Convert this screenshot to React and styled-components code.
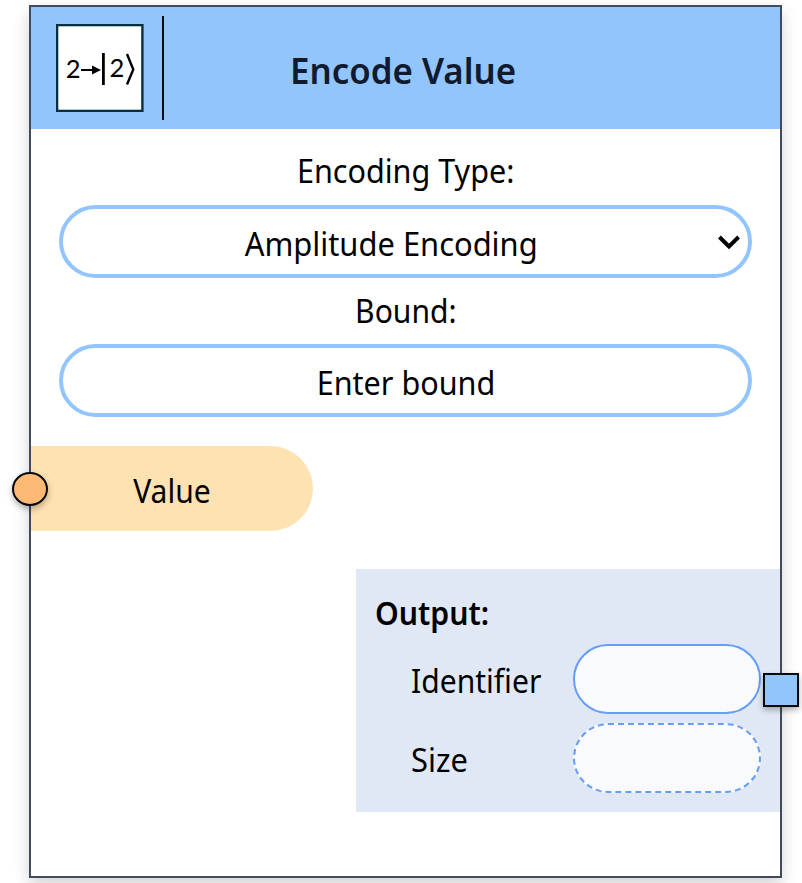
import React from 'react';
import styled, { createGlobalStyle } from 'styled-components';

const GlobalStyle = createGlobalStyle`
  *, *::before, *::after { box-sizing: border-box; }
  body {
    margin: 0;
    background: #fff;
    overflow: hidden;
    font-family: "Noto Sans", "Open Sans", sans-serif;
    color: #000;
  }
`;

const Canvas = styled.main`
  height: 883px;
  padding: 5px 20px 5px 29px;
  overflow: hidden;
`;

const Card = styled.article`
  position: relative;
  display: flex;
  flex-direction: column;
  width: 753px;
  height: 873px;
  border: 2px solid #414b5c;
  background: #fff;
  box-shadow: 0 8px 14px rgba(0, 0, 0, 0.13), 0 3px 20px rgba(0, 0, 0, 0.05);
`;

const Header = styled.header`
  display: grid;
  grid-template-columns: 132px 1fr 132px;
  align-items: center;
  height: 122px;
  flex: none;
  background: #93c5fd;
`;

const IconCell = styled.div`
  display: flex;
  align-items: center;
  justify-content: space-between;
  height: 104px;
  padding-left: 25px;
  width: 133px;
  border-right: 2px solid #05080d;
`;

const Text = styled.span`
  display: block;
  white-space: nowrap;
  font-size: ${(p) => p.$size || 32.5}px;
  font-weight: ${(p) => p.$weight || 400};
  line-height: 44px;
  color: ${(p) => p.$color || '#000'};
  transform: scaleX(${(p) => p.$condense || 1});
  transform-origin: ${(p) => p.$origin || 'center'};
`;

const Title = styled.h1`
  margin: 0;
  display: flex;
  justify-content: center;
  padding: 3px 4px 0 0;
`;

const Fields = styled.section`
  display: flex;
  flex-direction: column;
  align-items: center;
  padding: 20px 27px 0 27px;
`;

const Pill = styled.div`
  position: relative;
  display: flex;
  align-items: center;
  justify-content: center;
  width: 693px;
  height: 73px;
  padding: 5px ${(p) => p.$right || 0}px 0 0;
  margin: ${(p) => p.$margin};
  border: 4px solid #93c5fd;
  border-radius: 37px;
`;

const Chevron = styled.svg`
  position: absolute;
  right: 7px;
  top: 25px;
`;

const InputPort = styled.section`
  position: relative;
  display: flex;
  align-items: center;
  justify-content: center;
  width: 282px;
  height: 85px;
  margin-top: 29px;
  padding-top: 4px;
  border-radius: 0 43px 43px 0;
  background: #ffe2b1;
`;

const Handle = styled.i`
  position: absolute;
  width: 36px;
  height: 34px;
  border: 2px solid #05080d;
  box-shadow: 0 3px 6px rgba(0, 0, 0, 0.3);
`;

const RoundHandle = styled(Handle)`
  left: -19.5px;
  top: 26px;
  border-radius: 50%;
  background: #fdba74;
`;

const SquareHandle = styled(Handle)`
  right: -19px;
  top: 104px;
  background: #93c5fd;
`;

const Output = styled.section`
  position: relative;
  align-self: flex-end;
  width: 424px;
  height: 243px;
  margin-top: 38px;
  padding: 22px 19px 0 19px;
  background: #e1e8f5;
`;

const OutputRow = styled.div`
  display: flex;
  align-items: center;
  justify-content: space-between;
  height: 70px;
  padding-left: 36px;
  margin-top: 9px;

  > span { margin-top: 4px; }
`;

const OutputField = styled.div`
  width: 188px;
  height: 70px;
  border: 2px ${(p) => p.$line || 'solid'} #669df6;
  border-radius: 36px;
  background: #f8fafe;
`;

function EncodeIcon() {
  return (
    <svg width="88" height="88" viewBox="0 0 88 88">
      <rect x="1.1" y="1.1" width="85.3" height="85.8" fill="#fff" stroke="#06303d" strokeWidth="2.4" />
      <g fontFamily="Lato, sans-serif" fontSize="25.5" fill="#000">
        <text x="9.8" y="54">2</text>
        <text x="53.4" y="53">2</text>
      </g>
      <path d="M25 46H39" stroke="#000" strokeWidth="2" />
      <path d="M47.4 29V61" stroke="#000" strokeWidth="2.8" />
      <path d="M36 41.5L45 46L36 50.5Z" fill="#000" />
      <path d="M71 30L77.3 45.5L71 60.5" stroke="#000" strokeWidth="2.4" fill="none" />
    </svg>
  );
}

export default function App() {
  return (
    <>
      <GlobalStyle />
      <Canvas>
        <Card>
          <Header>
            <IconCell><EncodeIcon /></IconCell>
            <Title><Text $size={35.5} $weight={600} $color="#111a2e" $condense={0.982}>Encode Value</Text></Title>
          </Header>
          <Fields>
            <Text $condense={0.94}>Encoding Type:</Text>
            <Pill $margin="12px 0 11px" $right={28}>
              <Text $condense={0.95}>Amplitude Encoding</Text>
              <Chevron width="24" height="18" viewBox="0 0 24 18">
                <path d="M2.4 3L12 12.4L21.6 3" fill="none" stroke="#000" strokeWidth="3.9" />
              </Chevron>
            </Pill>
            <Text $condense={0.925}>Bound:</Text>
            <Pill $margin="11px 0 0">
              <Text $condense={0.94}>Enter bound</Text>
            </Pill>
          </Fields>
          <InputPort>
            <RoundHandle />
            <Text $condense={0.925}>Value</Text>
          </InputPort>
          <Output>
            <Text $weight={600} $condense={0.93} $origin="left">Output:</Text>
            <OutputRow>
              <Text $condense={0.925} $origin="left">Identifier</Text>
              <OutputField />
            </OutputRow>
            <OutputRow>
              <Text $condense={0.95} $origin="left">Size</Text>
              <OutputField $line="dashed" />
            </OutputRow>
            <SquareHandle />
          </Output>
        </Card>
      </Canvas>
    </>
  );
}
